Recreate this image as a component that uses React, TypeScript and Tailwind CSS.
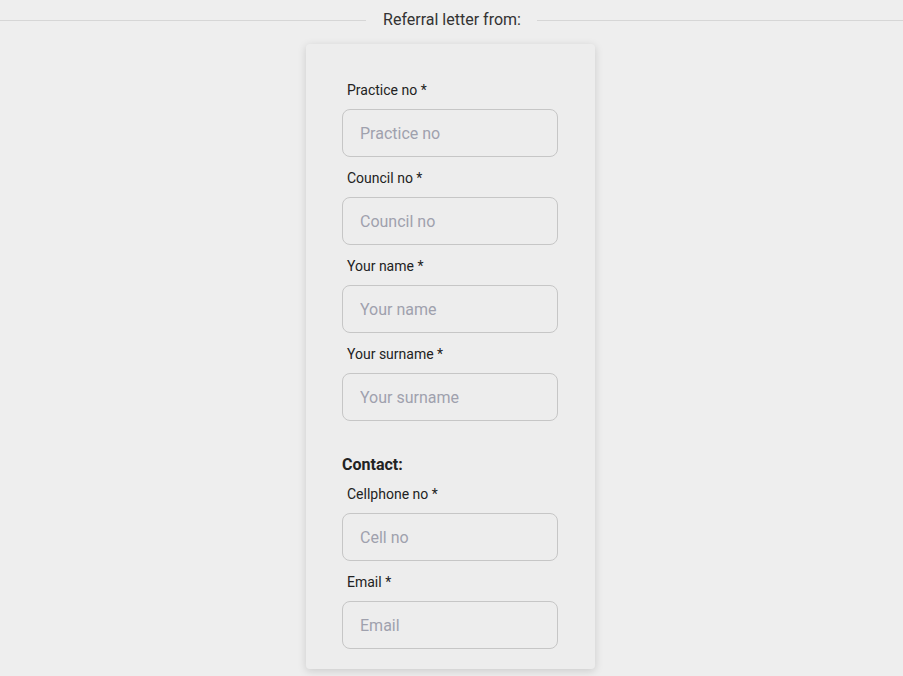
const fields = [
  { label: 'Practice no *', placeholder: 'Practice no' },
  { label: 'Council no *', placeholder: 'Council no' },
  { label: 'Your name *', placeholder: 'Your name' },
  { label: 'Your surname *', placeholder: 'Your surname' },
];

const contactFields = [
  { label: 'Cellphone no *', placeholder: 'Cell no' },
  { label: 'Email *', placeholder: 'Email' },
];

function Field({ label, placeholder }: { label: string; placeholder: string }) {
  return (
    <div className="mb-[11px] last:mb-0">
      <label className="block pl-[5px] mb-[9px] text-sm leading-5 text-[#222]">{label}</label>
      <input
        type="text"
        placeholder={placeholder}
        className="block w-[216px] h-12 rounded-lg border border-[#c6c6c6] bg-transparent pl-[17px] pr-4 text-base text-[#222] placeholder:text-[#9fa1ad] outline-none"
      />
    </div>
  );
}

export default function App() {
  return (
    <div
      className="min-h-screen bg-[#eeeeee] pt-2"
      style={{ fontFamily: 'Roboto, "Liberation Sans", sans-serif' }}
    >
      <div className="flex items-center">
        <div className="flex-1 h-px bg-[#d6d6d6]" />
        <h2 className="pl-[17px] pr-4 text-base leading-6 text-[#333]">Referral letter from:</h2>
        <div className="flex-1 h-px bg-[#d6d6d6]" />
      </div>

      <div className="flex justify-center mt-3">
        <div className="w-[289px] ml-[-2px] rounded bg-[#ededed] shadow-[0_2px_8px_rgba(0,0,0,0.15)] pt-9 pb-5 pl-9">
          {fields.map((f) => (
            <Field key={f.label} {...f} />
          ))}

          <h3 className="mt-[32px] mb-[7px] text-base font-bold leading-6 text-[#222]">Contact:</h3>

          {contactFields.map((f) => (
            <Field key={f.label} {...f} />
          ))}
        </div>
      </div>
    </div>
  );
}
